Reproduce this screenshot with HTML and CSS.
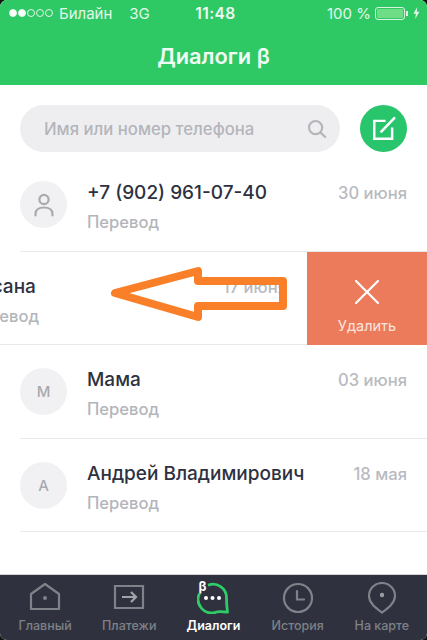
FILE: index.html
```html
<!DOCTYPE html>
<html lang="ru">
<head>
<meta charset="utf-8">
<title>Диалоги</title>
<link rel="stylesheet" href="styles.css">
</head>
<body>
<div class="app">
  <header class="header">
    <div class="status">
      <div class="status-left">
        <span class="signal"><i class="on"></i><i class="on"></i><i></i><i></i><i></i></span>
        <span>Билайн</span>
        <span class="net">3G</span>
      </div>
      <div class="clock">11:48</div>
      <div class="status-right">
        <span>100 %</span>
        <span class="battery"><span class="battery-fill"></span></span>
        <svg class="bolt" width="7" height="12" viewBox="0 0 7 12"><path d="M4.300 0 .4 6.800h2.500L2.200 12l4.200-7.300H3.800z" fill="#dff5e6"/></svg>
      </div>
    </div>
    <h1 class="title">Диалоги β</h1>
  </header>

  <div class="search-bar">
    <div class="search">
      <span>Имя или номер телефона</span>
      <svg width="20" height="20" viewBox="0 0 20 20" fill="none" stroke="#b4b5ba" stroke-width="2.200" stroke-linecap="round"><circle cx="8.600" cy="8.600" r="6.600"/><path d="m13.600 13.600 4.600 4.400"/></svg>
    </div>
    <button class="compose" aria-label="Новый диалог">
      <svg width="26" height="26" viewBox="0 0 24 24" fill="none" stroke="#fff" stroke-width="2.300"><path d="M13.500 4.500H3v16.500h16.500V10.500"/><path d="M9.500 14.500 21.500 2" stroke-linecap="round"/></svg>
    </button>
  </div>

  <main class="list">
    <div class="row">
      <div class="avatar">
        <svg width="22" height="26" viewBox="0 0 22 26" fill="none" stroke="#a9aab0" stroke-width="2.200" stroke-linecap="round"><circle cx="11" cy="7.500" r="4.600"/><path d="M2.500 23.500V22c0-4 3.500-6.500 8.500-6.500s8.500 2.500 8.500 6.500v1.500"/></svg>
      </div>
      <div class="body">
        <div class="line"><span class="name">+7 (902) 961-07-40</span><span class="date">30 июня</span></div>
        <div class="sub">Перевод</div>
      </div>
    </div>

    <div class="swipe">
      <div class="row shifted">
        <div class="avatar">О</div>
        <div class="body">
          <div class="line"><span class="name">Оксана</span><span class="date">17 июня</span></div>
          <div class="sub">Перевод</div>
        </div>
      </div>
      <div class="delete">
        <svg width="26" height="26" viewBox="0 0 26 26" fill="none" stroke="#fff" stroke-width="2.200" stroke-linecap="round"><path d="m2 2 22 22M24 2 2 24"/></svg>
        <span>Удалить</span>
      </div>
      <svg class="arrow" width="180" height="58" viewBox="0 0 180 58" fill="none" stroke="#f98028" stroke-width="8" stroke-linejoin="round"><path d="M6 27 89 5v10h85v25H89v11z"/></svg>
    </div>

    <div class="row">
      <div class="avatar">М</div>
      <div class="body">
        <div class="line"><span class="name">Мама</span><span class="date">03 июня</span></div>
        <div class="sub">Перевод</div>
      </div>
    </div>

    <div class="row">
      <div class="avatar">А</div>
      <div class="body">
        <div class="line"><span class="name">Андрей Владимирович</span><span class="date">18 мая</span></div>
        <div class="sub">Перевод</div>
      </div>
    </div>
  </main>

  <nav class="tabs">
    <div class="tab">
      <svg width="32" height="32" viewBox="0 0 32 32" fill="none" stroke="#80828a" stroke-width="2.200" stroke-linejoin="round"><path d="M2 12 16 2l14 10v15H2z"/><circle cx="16" cy="16" r="2" fill="#80828a" stroke="none"/></svg>
      <span>Главный</span>
    </div>
    <div class="tab">
      <svg width="32" height="32" viewBox="0 0 32 32" fill="none" stroke="#80828a" stroke-width="2.200"><path d="M2 4h28v22H2z"/><path d="M9 15h14m-5-5 5 5-5 5" stroke="#a2a4aa"/></svg>
      <span>Платежи</span>
    </div>
    <div class="tab active">
      <span class="beta">β</span>
      <svg width="32" height="32" viewBox="0 0 32 32" fill="none"><path d="M11 3.200A13.500 13.500 0 0 1 29.500 16c0 5 .3 9 1 14-4 0-8.500-1-12 .3A13.500 13.500 0 0 1 2.500 11.500" stroke="#2ecb66" stroke-width="2.800" stroke-linejoin="round"/><g fill="#fff"><circle cx="9" cy="16" r="2"/><circle cx="15.500" cy="16" r="2"/><circle cx="22" cy="16" r="2"/></g></svg>
      <span>Диалоги</span>
    </div>
    <div class="tab">
      <svg width="32" height="32" viewBox="0 0 32 32" fill="none" stroke="#80828a" stroke-width="2.200" stroke-linecap="round"><circle cx="16" cy="16" r="14"/><path d="M15 9v8.500h7"/></svg>
      <span>История</span>
    </div>
    <div class="tab">
      <svg width="30" height="32" viewBox="0 0 30 32" fill="none" stroke="#80828a" stroke-width="2.200" stroke-linejoin="round"><path d="M15 30.500C9 26 2 21 2 14a13 13 0 0 1 26 0c0 7-7 12-13 16.500z"/><circle cx="15" cy="13" r="2.200" fill="#9a9ca2" stroke="none"/></svg>
      <span>На карте</span>
    </div>
  </nav>
</div>
</body>
</html>
```
FILE: styles.css
```css
* { box-sizing: border-box; }
html, body { margin: 0; height: 100%; background: #111; }
body { font-family: Inter, "Liberation Sans", sans-serif; }

.app {
  width: 427px;
  height: 640px;
  display: flex;
  flex-direction: column;
  background: #fff;
  border-radius: 7px;
  overflow: hidden;
}

.header {
  height: 85px;
  background: #2ec965;
  color: #e3f7ea;
  flex: none;
}
.status {
  height: 26px;
  padding: 0 7px 0 9px;
  display: grid;
  grid-template-columns: 1fr auto 1fr;
  align-items: center;
  font-size: 15px;
}
.status-left { display: flex; align-items: center; gap: 5px; }
.net { margin-left: 12px; }
.signal { display: flex; gap: 1px; margin-right: 1px; }
.signal i {
  width: 8px;
  height: 8px;
  border-radius: 50%;
  border: 1px solid #e3f7ea;
}
.signal i.on { background: #fff; }
.clock { font-weight: 600; font-size: 15.500px; letter-spacing: .4px; color: #eefaf2; margin-left: 2px; }
.status-right { display: flex; align-items: center; justify-content: flex-end; gap: 4px; }
.battery {
  width: 30px;
  height: 13px;
  border: 1px solid #d9f3e1;
  border-radius: 3px;
  padding: 1px;
  position: relative;
  margin-right: 4px;
}
.battery::after {
  content: "";
  position: absolute;
  right: -4px;
  top: 3px;
  width: 2px;
  height: 5px;
  background: #d9f3e1;
}
.battery-fill { display: block; height: 100%; background: #6edd86; border-radius: 1px; }
.title {
  margin: 0;
  padding-top: 16px;
  text-align: center;
  font-size: 21.800px;
  line-height: 28px;
  font-weight: 600;
  color: #f0fbf4;
}

.search-bar {
  flex: none;
  height: 73px;
  padding: 20px 20px 6px;
  display: flex;
  gap: 20px;
}
.search {
  flex: 1;
  height: 47px;
  border-radius: 24px;
  background: #eeeef1;
  padding: 0 13px 0 24px;
  display: flex;
  align-items: center;
  justify-content: space-between;
  color: #b4b5bb;
  font-size: 16.700px;
  font-weight: 500;
}
.compose {
  width: 47px;
  height: 47px;
  padding: 0;
  border: 0;
  border-radius: 50%;
  background: #28c56c;
  display: flex;
  align-items: center;
  justify-content: center;
}

.list { flex: 1; }
.row {
  position: relative;
  height: 93.500px;
  display: flex;
  gap: 20px;
  padding-left: 20px;
  align-items: center;
}
.row::after {
  content: "";
  position: absolute;
  left: 20px;
  right: 0;
  bottom: 0;
  height: 1px;
  background: #e9e9ec;
}
.avatar {
  flex: none;
  width: 47px;
  height: 47px;
  border-radius: 50%;
  background: #f1f1f3;
  color: #a9aab0;
  font-size: 15px;
  font-weight: 500;
  display: flex;
  align-items: center;
  justify-content: center;
}
.body {
  flex: 1;
  height: 100%;
  padding: 23px 20px 0 0;
}
.line { display: flex; justify-content: space-between; align-items: baseline; }
.name { font-size: 19px; line-height: 24px; font-weight: 500; color: #2e3140; }
.date { font-size: 16.600px; font-weight: 500; color: #b9bac0; }
.sub { margin-top: 7px; font-size: 16.600px; line-height: 20px; font-weight: 500; color: #b4b5bb; }

.swipe {
  position: relative;
  display: flex;
  height: 93.500px;
  overflow: hidden;
}
.shifted { flex: 0 0 427px; margin-left: -120px; }
.delete {
  flex: 0 0 120px;
  background: #ec7b5c;
  color: #fbe6df;
  font-size: 14.500px;
  display: flex;
  flex-direction: column;
  align-items: center;
  padding-top: 27px;
  gap: 12px;
}
.arrow { position: absolute; left: 109px; top: 14px; }

.tabs {
  flex: none;
  height: 66px;
  background: #2f323e;
  border-top: 1px solid #d5d5d8;
  display: grid;
  grid-template-columns: repeat(5, 1fr);
  padding: 0 3px;
}
.tab {
  position: relative;
  display: flex;
  flex-direction: column;
  align-items: center;
  gap: 4px;
  padding-top: 7px;
  font-size: 12.500px;
  font-weight: 500;
  color: #7e8087;
}
.tab.active { color: #fff; font-weight: 600; }
.beta {
  position: absolute;
  top: 5px;
  left: 27px;
  font-size: 13px;
  font-weight: 700;
  line-height: 13px;
  color: #fff;
}
```
